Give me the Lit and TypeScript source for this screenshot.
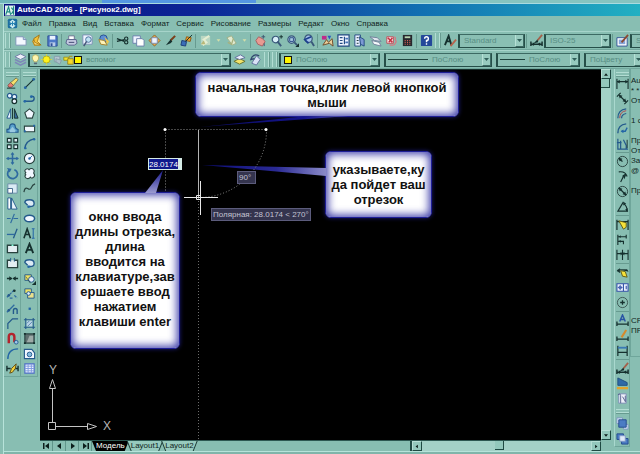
import { LitElement, html, svg, css, nothing, SVGTemplateResult } from "lit";
import { customElement, property } from "lit/decorators.js";

const N = "#245a8c";
const K = "#15302e";

const ICONS: Record<string, SVGTemplateResult> = {
  app: svg`<rect x="1" y="1" width="12" height="12" rx="2" fill="#1d6fa0"/><path d="M3 5l4-3 4 3-2 1v3l2 1-4 3-4-3 2-1V6z" fill="#cfeef2"/><path d="M3 7h8M7 4v6" stroke="#2a86b5" stroke-width="1.4"/>`,
  logo: svg`<rect width="14" height="14" fill="#dff3ef"/><path d="M1 13L5 2l3 11M3 9h4M9 3l3 4-3 5M12 1v12" stroke="#1c8a82" stroke-width="1.6" fill="none"/>`,
  newDoc: svg`<path d="M2 3h8l3 3v6H2z" fill="#f4f8ff" stroke="#7c93b5"/><path d="M10 3v3h3" fill="#b9cbe6" stroke="#7c93b5"/>`,
  open: svg`<path d="M11 12L5 12 3 8 6 4l4-1" fill="#ffe58a" stroke="#b98412" stroke-width="1.2"/><path d="M10 1L4 5l1 4 7 3-4-4z" fill="#f2c23a" stroke="#9a6a10" stroke-width=".8"/>`,
  save: svg`<path d="M2 2h10v11H2z" fill="#4d79c8" stroke="#2c4f96"/><path d="M4 2h6v4H4z" fill="#eaf2ff"/><path d="M4 9h6v4H4z" fill="#b8cbe8"/><path d="M5 10h2v3H5z" fill="#2c4f96"/>`,
  print: svg`<path d="M4 2h6v4H4z" fill="#fff" stroke="#6a7090"/><path d="M2 6h10l1 4-3 2H4L1 10z" fill="#c6cbe2" stroke="#56608a"/><path d="M4 9h6" stroke="#39406a"/>`,
  preview: svg`<path d="M2 1h8l2 2v8H2z" fill="#eef4ff" stroke="#7b8fb4"/><circle cx="8" cy="6" r="3" fill="#bfe2f2" stroke="#466c9a"/><path d="M6 8l-3 5" stroke="#46557a" stroke-width="1.6"/>`,
  publish: svg`<circle cx="7" cy="5" r="4" fill="#5c8fd6" stroke="#28508f"/><path d="M2 6l6 1 3 5-7-1z" fill="#fff2b8" stroke="#a1802a"/><path d="M8 3l5 5-2 3z" fill="#f0c548"/>`,
  cut: svg`<path d="M1 8l8-2M1 5l8 3" stroke="${K}" stroke-width="1.4"/><circle cx="11" cy="5" r="1.8" fill="none" stroke="${K}" stroke-width="1.2"/><circle cx="11" cy="9" r="1.8" fill="none" stroke="${K}" stroke-width="1.2"/>`,
  copyDoc: svg`<path d="M1 2h8v8H1z" fill="#eef3ff" stroke="#6b80ac"/><path d="M5 5h6l2 2v6H5z" fill="#fff" stroke="#6b80ac"/>`,
  paste: svg`<path d="M7 1l6 6-6 6-6-6z" fill="#e6a84c" stroke="#8f6428"/><path d="M4 4h6v6H4z" fill="#eef4ff" stroke="#7a8cb4"/>`,
  brush: svg`<path d="M12 2L7 7" stroke="#7a3f1b" stroke-width="2.2"/><path d="M7 6L2 12l5-2 2-2z" fill="${K}"/>`,
  block: svg`<path d="M7 3l5 1-1 4-5-1z" fill="#f3a12c" stroke="#8f5a12"/><path d="M2 7l5 1-1 5-5-1z" fill="#3a6db8" stroke="#1c3d78"/><path d="M13 1L6 8" stroke="${K}"/>`,
  undo: svg`<path d="M2 2h10v10H2z" fill="#b9d6c2"/><path d="M11 2L5 6l3 3-4 3" fill="none" stroke="#e5eed2" stroke-width="2.2"/><path d="M2 11l3-4 2 4z" fill="#b9b878"/>`,
  redo: svg`<path d="M2 4l5-2 5 8-4 2z" fill="#e1ead0" stroke="#9daf86"/><path d="M3 9l4 2 2-6" stroke="#a8b07c" fill="none" stroke-width="1.4"/>`,
  tri: svg`<path d="M4 5h6l-3 4z" fill="#d3dfa8"/>`,
  pan: svg`<path d="M2 7l3-4 4 2 3 3-3 5-5-2z" fill="#e89a92" stroke="#a95d60"/><path d="M10 1v4M8 3h4M11 10v3" stroke="#3d5470"/>`,
  zoomRt: svg`<circle cx="6" cy="6" r="3.6" fill="#d7eef7" stroke="#39587a" stroke-width="1.3"/><path d="M8 8l4 5" stroke="#39587a" stroke-width="2"/><path d="M10 3h4M12 1v4" stroke="${K}"/>`,
  zoomWin: svg`<circle cx="6" cy="6" r="4" fill="#a9cbe0" stroke="#39587a" stroke-width="1.3"/><path d="M4 4h4v4H4z" fill="none" stroke="#2a4a86"/><path d="M9 9l3 3" stroke="#39587a" stroke-width="2"/><path d="M14 10v4h-4z" fill="${K}"/>`,
  zoomPrev: svg`<circle cx="7" cy="5" r="4" fill="#a4c2e8" stroke="#39587a" stroke-width="1.3"/><path d="M10 8l3 5" stroke="#39587a" stroke-width="2"/><path d="M10 3L3 6l4 4" fill="none" stroke="#1c3f8e" stroke-width="1.8"/>`,
  props: svg`<path d="M1 2h5v4H1z" fill="#c02a8a"/><path d="M7 2h4l-2 4z" fill="#2a58c0"/><path d="M2 12l4-6 2 3 4-4 1 8-4-3z" fill="#ecd09a" stroke="#704a28"/>`,
  designCenter: svg`<path d="M1 1h12v12H1z" fill="#f0f5ff" stroke="#234a82" stroke-width="1.3"/><path d="M3 4h3M3 7h3M3 10h3M8 3v8" stroke="#234a82" stroke-width="1.3"/><path d="M9 4h3v2H9zM9 8h3v2H9z" fill="#4b77bb"/>`,
  palettes: svg`<path d="M2 1h6v12H2z" fill="#e7efff" stroke="#234a82"/><path d="M4 4h2M4 7h2M4 10h2" stroke="${K}"/><path d="M7 3l5 3v7l-4-2z" fill="#7d9ad4" stroke="#234a82"/>`,
  sheets: svg`<path d="M1 3l8 1 4 4-7-1z" fill="#dfe5ee" stroke="#70809a"/><path d="M3 7l8 2 2 4-8-2z" fill="#f6f8fb" stroke="#70809a"/>`,
  markup: svg`<path d="M2 3h7v7H2z" fill="#f7e4e8" stroke="#c4303f" stroke-width=".8"/><path d="M3 4l5 5M8 4L4 9" stroke="#c4303f" stroke-width="1.6"/><path d="M10 3q2 1 1 3 2 2 0 4 0 2-3 2H5" fill="none" stroke="#d67882" stroke-width="1.2"/>`,
  calc: svg`<path d="M2 1h10v12H2z" fill="#26282e"/><path d="M4 2.500h6v2H4z" fill="#b7d3b0"/><path d="M4 7h1M6.500 7h1M9 7h1M4 9h1M6.500 9h1M9 9h1M4 11h1M6.500 11h1M9 11h1" stroke="#e0655a" stroke-width="1.2"/>`,
  help: svg`<rect x="1" y="1" width="12" height="12" rx="1" fill="#24489a"/><path d="M5 5q0-2 2-2t2 2-2 2v2M7 10v1.500" fill="none" stroke="#fff" stroke-width="1.5"/>`,
  textStyle: svg`<path d="M1 12L5 2l3 10M3 8h4" stroke="${K}" stroke-width="2" fill="none"/><path d="M13 6L7 13" stroke="#b6634e" stroke-width="2"/>`,
  dimStyle: svg`<path d="M1 8v5M13 8v5M1 11h12" stroke="${K}" stroke-width="1.6"/><path d="M3 9l3 2-3 2zM11 9l-3 2 3 2z" fill="${K}"/><path d="M13 1L8 7" stroke="#a4604a" stroke-width="2"/><path d="M8 6l-4 4 5-1z" fill="${K}"/>`,
  tableStyle: svg`<path d="M1 4h11v9H1z" fill="#fff" stroke="#2c4f96"/><path d="M3 6h7v5H3z" fill="#87a4d8"/><path d="M13 1L6 9" stroke="#8a4a32" stroke-width="2"/>`,
  layers: svg`<path d="M1 4l6-3 6 3-6 3z" fill="#eef0f8" stroke="#6f7ba6"/><path d="M1 7l6 3 6-3M1 10l6 3 6-3" fill="none" stroke="#7d88b8" stroke-width="1.6"/>`,
  bulb: svg`<path d="M7 1q4 0 4 4 0 2-2 4v1H5V9Q3 7 3 5q0-4 4-4z" fill="#fff6b0" stroke="#a9a04c" stroke-width=".8"/><path d="M5 11h4v2H5z" fill="#596a78"/>`,
  sun: svg`<circle cx="7" cy="7" r="4.500" fill="#fdf21c" stroke="#a9a21a"/><path d="M7 0v2M7 12v2M0 7h2M12 7h2M2 2l1 1M11 11l1 1M12 2l-1 1M2 12l1-1" stroke="#e8dc30"/>`,
  freeze: svg`<path d="M3 3h7v7H3z" fill="#b4c7d0" stroke="#8298a6"/><path d="M5 6l7 2-2 5-5-3z" fill="#a9bfc8" stroke="#8298a6"/>`,
  lock: svg`<path d="M1 4h6v4H1z" fill="#f4e22c" stroke="#8f8a18"/><path d="M6 6h7v7H6z" fill="#f4d82c" stroke="#8f7a18"/><path d="M8 6V3h4" stroke="#a59c2e" fill="none" stroke-width="1.4"/>`,
  layPrev: svg`<path d="M1 9l6-3 6 3-6 3z" fill="#f1e36a" stroke="#66702c"/><path d="M2 5l6-3 5 3-6 2z" fill="#e8edf9" stroke="#60709c"/>`,
  layBack: svg`<path d="M3 11l5-8 4 4-4 6z" fill="#d9e2f6" stroke="#61719e"/><path d="M11 3Q4 0 2 7l4-1" fill="none" stroke="#31466f" stroke-width="1.4"/>`,
  erase: svg`<path d="M2 9l3-3 3 3-2 2H3z" fill="#e98078" stroke="#7c3c3c" stroke-width=".8"/><path d="M5 6l6-5 2 2-5 6z" fill="#f7e06b" stroke="#6a6138" stroke-width=".8"/><path d="M1 12h9" stroke="${K}"/>`,
  copy: svg`<circle cx="4" cy="4" r="2.500" fill="#e9f4ff" stroke="${N}" stroke-width="1.3"/><circle cx="9" cy="5" r="2.500" fill="#e9f4ff" stroke="${N}" stroke-width="1.3"/><circle cx="9" cy="10" r="2.500" fill="#e9f4ff" stroke="${K}" stroke-width="1.300"/>`,
  mirror: svg`<path d="M5 2v10H1z" fill="#e9f4ff" stroke="${N}"/><path d="M9 2v10h4z" fill="#356a9c" stroke="${K}"/><path d="M7 1v12" stroke="${K}"/>`,
  offset: svg`<path d="M1 11V8q3 0 3-3t3-3 3 3q0 2 3 3v3z" fill="#5aa0cc" stroke="${N}" stroke-width="1.2"/><path d="M4 11V9l3-4 3 4v2z" fill="#9ac9e0"/>`,
  array: svg`<path d="M1.500 1.500h4v4h-4zM8.500 1.500h4v4h-4zM1.500 8.500h4v4h-4zM8.500 8.500h4v4h-4z" fill="#dcebf2" stroke="${K}" stroke-width="1.2"/>`,
  move: svg`<path d="M7 1v12M1 7h12" stroke="#2e6aa0" stroke-width="1.600"/><path d="M5 3l2-3 2 3zM5 11l2 3 2-3zM3 5L0 7l3 2zM11 5l3 2-3 2z" fill="#2e6aa0"/>`,
  rotate: svg`<path d="M4 3Q1 5 2 9q2 4 6 3.500 4-1 4.500-5Q12 4 9 3" fill="none" stroke="#2e6aa0" stroke-width="1.800"/><path d="M1 1l5 1-2 4z" fill="#2e6aa0"/>`,
  scale: svg`<path d="M2 2h10v10H2z" fill="#d9eaf4" stroke="#6b8da6"/><path d="M2 7h5v5H2z" fill="#fff" stroke="#42688c"/>`,
  stretch: svg`<path d="M2 1h3v12H2z" fill="#fff" stroke="${N}"/><path d="M6 1l6 12H6z" fill="#eaf4fb" stroke="${N}"/>`,
  trim: svg`<path d="M1 7h4M8 7h5" stroke="#2e6aa0" stroke-width="1.300"/><path d="M9 2L5 12" stroke="#2e6aa0" stroke-width="1.300"/>`,
  extend: svg`<path d="M1 8h8" stroke="#2e6aa0" stroke-width="1.400"/><path d="M12 2L8 12" stroke="${N}" stroke-width="1.400"/>`,
  breakPt: svg`<path d="M1.500 3.500h11v8h-11z" fill="#e3eef2" stroke="#28423f" stroke-width="1.400"/><path d="M6 3.500h2" stroke="#8fd" stroke-width="1.600"/>`,
  breakTwo: svg`<path d="M5 3.500H1.500v8h11v-8H9" fill="#e3eef2" stroke="#28423f" stroke-width="1.400"/><path d="M5 1v4M9 1v4" stroke="${N}"/>`,
  join: svg`<path d="M1 7h5M8 7h5" stroke="${K}" stroke-width="1.600"/><path d="M3.500 4.500L7 7l-3.500 2.500zM10.500 4.500L7 7l3.500 2.500z" fill="${K}"/>`,
  chamferA: svg`<path d="M1 11l8-8M4 12h3M9 9l3 3" stroke="#2e6aa0" stroke-width="1.400" stroke-dasharray="3 1"/><circle cx="9" cy="4" r="1.400" fill="${K}"/><circle cx="3" cy="9" r="1.400" fill="${N}"/>`,
  chamferB: svg`<path d="M1 11l8-8" stroke="#2e6aa0" stroke-width="1.400"/><circle cx="3" cy="9" r="1.400" fill="${N}"/><path d="M8 13V9q0-2 2-2t2 2v4" fill="none" stroke="${N}" stroke-width="1.500"/>`,
  chamfer: svg`<path d="M2 13V7l5-5h6" fill="none" stroke="${N}" stroke-width="1.300"/>`,
  magnet: svg`<path d="M3 12V5q0-3 3-3t3 3v6" fill="none" stroke="#b3232c" stroke-width="2.600"/><circle cx="11" cy="11" r="2" fill="#9fc7ea" stroke="${N}"/>`,
  fillet: svg`<path d="M2 13Q2 2 13 2" fill="none" stroke="#2466a6" stroke-width="1.500"/>`,
  explode: svg`<path d="M1 4v6M13 4v6M1 7h4M9 7h4" stroke="${K}" stroke-width="1.500"/><path d="M4 12l2-5 5-5-1 5-3 4z" fill="#f3d33d" stroke="#5d4a14"/>`,
  line: svg`<path d="M2 12L12 2" stroke="${K}" stroke-width="1.200"/><circle cx="2.500" cy="11.500" r="1.500" fill="#2466a6"/><circle cx="11.500" cy="2.500" r="1.500" fill="#2466a6"/>`,
  pline: svg`<path d="M1 10h8q3 0 3-3T9 5" fill="none" stroke="${N}" stroke-width="1.500"/><circle cx="2" cy="10" r="1.500" fill="#2466a6"/><circle cx="9" cy="5" r="1.500" fill="#2466a6"/>`,
  polygon: svg`<path d="M7 2l5 4-2 6H4L2 6z" fill="#f1f7ff" stroke="#28423f" stroke-width="1.200"/>`,
  rect: svg`<path d="M1.500 4.500h11v6h-11z" fill="#f1f7ff" stroke="#28423f" stroke-width="1.200"/><path d="M1 10h2M11 4h2" stroke="#2466a6" stroke-width="2"/>`,
  arc: svg`<path d="M2 12Q3 4 12 2" fill="none" stroke="${N}" stroke-width="1.500"/><circle cx="2.500" cy="12" r="1.300" fill="#2466a6"/><circle cx="12" cy="2.500" r="1.300" fill="#2466a6"/>`,
  circle: svg`<circle cx="7" cy="7" r="5.500" fill="#f1f7ff" stroke="#28423f" stroke-width="1.200"/><path d="M7 7l3-3" stroke="#2466a6"/><circle cx="7" cy="7" r="1.300" fill="#2466a6"/>`,
  cloud: svg`<path d="M3 6Q1 4 3 2.500 5 1 6.500 3 8 1 10.500 2 13 3.500 11.500 6.500 13.500 9 11.500 11 9.500 13 8 11 6 13.500 3.500 12 1 10 3 8.500 1.500 7.500 3 6z" fill="#f1f7ff" stroke="#28423f" stroke-width="1.200"/>`,
  spline: svg`<path d="M1 11q1-6 4-4t4-1 4-4" fill="none" stroke="#28423f" stroke-width="1.300"/>`,
  ellipse: svg`<ellipse cx="7" cy="7" rx="5.500" ry="3.500" fill="#f1f7ff" stroke="${N}" stroke-width="1.600"/>`,
  ellArc: svg`<path d="M6 10Q12 11 12 7T7 3 2 6l3 3" fill="#dceaf4" stroke="${N}" stroke-width="1.500"/><circle cx="6" cy="10.500" r="1.400" fill="#2466a6"/>`,
  mtext: svg`<path d="M1 12L4.500 2 8 12M2.500 8h4" stroke="${K}" stroke-width="1.700" fill="none"/><path d="M11 2v10M9.500 2h3M9.500 12h3" stroke="#2466a6" stroke-width="1.100"/>`,
  text: svg`<path d="M3 12L7 2l4 10M4.500 8.500h5" stroke="${K}" stroke-width="2" fill="none"/>`,
  insert: svg`<path d="M2 3h7v6H2z" fill="#f0e264" stroke="${N}"/><circle cx="9" cy="8" r="3" fill="#dfeaf8" stroke="${N}"/><path d="M3 5l5 7M14 10v4h-4z" stroke="${K}" fill="${K}" stroke-width=".6"/>`,
  makeBlock: svg`<path d="M2 2h7v5H2z" fill="#f0e264" stroke="${N}"/><path d="M5 6h7v6H5z" fill="#e9e08c" stroke="${N}"/><circle cx="6" cy="7" r="2" fill="#dfeaf8" stroke="${N}"/>`,
  point: svg`<path d="M6 6h2.500v2.500H6z" fill="#2466a6"/>`,
  hatch: svg`<path d="M3 1v12M11 1v12M1 3h12M1 11h12" stroke="${N}" stroke-width="1.200"/><path d="M4 4h6v6H4z" fill="#b9d3e6"/><path d="M4 7l3-3M5 10l5-5" stroke="#5a87ae"/>`,
  gradient: svg`<path d="M2 2h10v10H2z" fill="#5f7070" stroke="${K}"/><path d="M7 4h4v7H4z" fill="#9daba8"/><path d="M1 1h2v2H1zM11 1h2v2h-2zM1 11h2v2H1zM11 11h2v2h-2z" fill="${K}"/>`,
  region: svg`<path d="M1.500 2.500h8l3 4v6h-11z" fill="#f1f7ff" stroke="${N}" stroke-width="1.200"/><circle cx="7" cy="8" r="2.500" fill="#86bce0" stroke="${N}"/>`,
  table: svg`<path d="M2 2h10v10H2z" fill="#eef3ff" stroke="#4b6cc4" stroke-width="1.200"/><path d="M2 4.500h10M2 7h10M2 9.500h10M5.500 2v10M9 2v10" stroke="#7e9be0"/>`,
  dLinear: svg`<path d="M1 2v11M13 2v11M1 5h12" stroke="${K}" stroke-width="1.200"/><path d="M1 5l3-2v4zM13 5l-3-2v4z" fill="${K}"/>`,
  dAligned: svg`<path d="M4 4l6 6M1 5l4-4M9 13l4-4" stroke="${K}" stroke-width="1.300"/><path d="M3 3l4 1-3 3zM11 11l-4-1 3-3z" fill="${K}"/>`,
  dArc: svg`<path d="M2 12Q2 3 11 2M6 12q0-4 5-5" fill="none" stroke="${N}" stroke-width="1.300"/><path d="M4 12Q4 5 11 4" fill="none" stroke="#b2404a"/>`,
  dOrd: svg`<path d="M2 12Q2 3 11 2" fill="none" stroke="${N}" stroke-width="1.500"/><path d="M6 10h4l2-4" fill="none" stroke="#2466a6" stroke-width="1.500"/><path d="M5 10l3-2v4z" fill="#2466a6"/>`,
  dRad: svg`<path d="M2 2v11h11M5 4v9M8 3l3 6v4M1 6h5" stroke="${N}" stroke-width="1.300" fill="none"/><path d="M12 3v9" stroke="${K}"/>`,
  dCirc: svg`<circle cx="7" cy="7" r="5.500" fill="none" stroke="#28423f"/><path d="M7 7L3 4" stroke="${K}" stroke-width="1.300"/><path d="M3 3l4 1-3 3z" fill="${K}"/>`,
  dJog: svg`<path d="M3 2q7-1 9 5M5 13l2-4 1-3 3-2" fill="none" stroke="${K}" stroke-width="1.200"/><path d="M7 6l4-1-2 5z" fill="${K}"/>`,
  dDia: svg`<circle cx="7" cy="7" r="5.500" fill="none" stroke="#28423f"/><path d="M3 3l8 8" stroke="${K}" stroke-width="1.300"/><path d="M3 3l4 1-3 3zM11 11l-4-1 3-3z" fill="${K}"/>`,
  dAng: svg`<path d="M8 2L2 12h11M8 4q4 2 4 8" fill="none" stroke="${K}" stroke-width="1.200"/><path d="M8 2l3 2-3 2zM13 9l-1 4-2-3z" fill="${K}"/>`,
  dQuick: svg`<path d="M1 2v11M13 2v11M1 4h12" stroke="${K}" stroke-width="1.300"/><path d="M3 3l8 2v5l-3 2z" fill="#f6e23a" stroke="#5d5a14"/>`,
  dBase: svg`<path d="M2 2v11M2 4h9v2M2 9h6v3M11 2v4" stroke="${K}" stroke-width="1.200" fill="none"/><path d="M3 4l2-1.500v3zM3 9l2-1.500v3z" fill="${K}"/>`,
  dCont: svg`<path d="M1 2v11M7 2v11M13 2v11M1 6h12" stroke="${K}" stroke-width="1.200"/><path d="M7 6L5 4v4zM7 6l2-2v4z" fill="${K}"/>`,
  dLeader: svg`<path d="M1 5l3-2v4zM4 4h8l1 2" stroke="${K}" fill="${K}" stroke-width=".8"/><path d="M5 5l5 1 2 6-5-1z" fill="#f6e23a" stroke="#5d5a14"/>`,
  dTol: svg`<path d="M1 3h12v8H1z" fill="#eef3ff" stroke="#3553a8" stroke-width="1.200"/><path d="M8 3v8M11 5v4" stroke="#3553a8" stroke-width="1.2"/><circle cx="4.500" cy="7" r="1.500" fill="none" stroke="#3553a8"/><path d="M2 7h5M4.500 4.500v5" stroke="#3553a8" stroke-width=".8"/>`,
  dCenter: svg`<circle cx="7" cy="7" r="5.500" fill="none" stroke="#3a5552"/><path d="M7 4.500v5M4.500 7h5" stroke="${K}" stroke-width="1.400"/>`,
  dEdit: svg`<path d="M4 8l3-7 3 7M5 6h4" stroke="#2a55a4" stroke-width="1.600" fill="none"/><path d="M1 8v5M13 8v5M1 11h12" stroke="${K}" stroke-width="1.400"/>`,
  dTedit: svg`<path d="M1 8v5M13 8v5M1 11h12" stroke="${K}" stroke-width="1.400"/><path d="M11 1L6 9" stroke="#d58a2c" stroke-width="2.200"/>`,
  dUpdate: svg`<path d="M2 2v11M12 2v11M2 9h10" stroke="${K}" stroke-width="1.300"/><path d="M2 3h10v2H2z" fill="#3a7ab4"/>`,
  dWedge: svg`<path d="M2 1l10 5v3H2z" fill="#2f6aa8" stroke="#1f4e80"/><path d="M1 12h12" stroke="#e2a32c" stroke-width="2.400"/>`,
  dScript: svg`<path d="M3 2h8v10H3z" fill="#eef0fa" stroke="#7c8ab4"/><path d="M2 3q3-2 3 1v8M10 4v7M7 5l3 5" stroke="#53608c" fill="none"/>`,
  orderA: svg`<path d="M1 1h6v6H1zM8 8h5v5H8z" fill="#dfeaf8" stroke="#7e97c4"/><path d="M3 3h8v8H3z" fill="#4b7cc4" stroke="#234a8c"/>`,
  orderB: svg`<path d="M1 2h7v6H1z" fill="#4b7cc4" stroke="#234a8c"/><path d="M6 7h7v6H6z" fill="#4b7cc4" stroke="#234a8c"/><path d="M4 4h6v6H4z" fill="#dfeaf8" stroke="#7e97c4"/>`,
};

const icon = (name: string) =>
  html`<svg class="ic" viewBox="0 0 14 14" aria-hidden="true">${ICONS[name]}</svg>`;

const toolButton = (name: string) =>
  name === "|"
    ? html`<i class="sep"></i>`
    : html`<button class=${name === "tri" ? "tool slim" : "tool"} aria-label=${name}>${icon(name)}</button>`;

const shared = css`
  * { box-sizing: border-box; }
  button, input, select {
    font: inherit; color: inherit; margin: 0; padding: 0; border: 0;
    background: none; border-radius: 0; appearance: none; outline: 0;
  }
  .ic { display: block; width: 13px; height: 13px; flex: none; }
`;

@customElement("cad-combo")
class CadCombo extends LitElement {
  @property() label = "";
  @property() value = "";
  @property({ type: Boolean }) swatch = false;
  @property({ type: Boolean }) stroke = false;
  @property({ type: Boolean }) states = false;

  static styles = [shared, css`
    :host { display: block; min-width: 0; }
    .box {
      display: flex; align-items: center; height: 14px; overflow: hidden;
      border: 1px solid #264f49; border-left-width: 2px; border-top-color: #3c6a63;
      background: #8abfb3; color: #588e84;
    }
    .swatch { width: 8px; height: 8px; flex: none; border: 1px solid #111; background: #fdf500; margin-left: 3px; }
    .stroke { flex: 1; height: 1px; margin-left: 2px; background: #1e433d; }
    .states { display: flex; }
    .states .ic { width: 11px; height: 11px; }
    select { flex: 1; min-width: 0; height: 12px; padding-left: 4px; line-height: 12px; }
    .arrow {
      flex: none; width: 9px; height: 12px; display: grid; place-items: center;
      background: #97cabe; border-right: 1px solid #3c6a63; border-bottom: 1px solid #3c6a63;
      border-left: 1px solid #b7e0d6;
    }
    .arrow svg { width: 5px; height: 3px; }
    .swatch.tight { margin-left: 0; }
    .fixed { flex: 0 0 var(--text-room, 45px); }
  `];

  render() {
    return html`<label class="box">
      ${this.states ? html`<span class="states">${["bulb", "sun", "freeze", "lock"].map(icon)}</span>` : nothing}
      ${this.swatch ? html`<i class="swatch ${this.states ? "tight" : ""}"></i>` : nothing}
      ${this.stroke ? html`<i class="stroke"></i>` : nothing}
      <select class=${this.stroke ? "fixed" : ""} aria-label=${this.label}><option>${this.value}</option></select>
      <span class="arrow"><svg viewBox="0 0 5 3"><path d="M0 0h5L2.500 3z" fill="#31605a"/></svg></span>
    </label>`;
  }
}

@customElement("app-root")
class AppRoot extends LitElement {
  static styles = [shared, css`
    :host {
      display: flex; flex-direction: column; height: 100vh; min-height: 400px; overflow: hidden;
      font: 8px/10px "Liberation Sans", Arial, sans-serif; color: #102522; background: #88beb2;
    }
    .behind { height: 4px; flex: none; display: flex; border-bottom: 1px solid #a9dbe0; background: #86c4c0; }
    .behind i { width: 16%; background: #6fb5b9; }
    .behind b { width: 24%; background: #5597e2; }
    .window { flex: 1; min-height: 0; margin-left: 3px; display: flex; flex-direction: column; border-left: 1px solid #b7e3da; }
    .title {
      flex: none; display: flex; align-items: center; gap: 2px; height: 12px; padding-left: 1px;
      font-weight: bold; color: #fff; white-space: nowrap;
      background: linear-gradient(90deg, #0b1680, #0c2496 30%, #1170b2 66%, #22b0c2);
    }
    .title .ic { width: 10px; height: 11px; }
    .menu { flex: none; display: flex; align-items: center; gap: 7px; height: 15px; padding-left: 3px; white-space: nowrap; }
    .menu .ic { width: 11px; height: 11px; margin-right: -3px; }
    .menu button { line-height: 12px; }
    .bar { flex: none; display: flex; align-items: center; height: 19px; border-top: 1px solid #a6d4ca; border-bottom: 1px solid #71a79c; }
    .tool { flex: none; width: 16px; height: 15px; display: grid; place-items: center; }
    .slim { width: 10px; }
    .slim .ic { width: 9px; height: 9px; }
    .sep { flex: none; align-self: center; width: 1px; height: 14px; margin: 0 1px; background: #679b90; }
    .grip { flex: none; width: 5px; height: 15px; margin: 0 2px 0 1px; border: solid #b2ddd3; border-width: 0 1px; box-shadow: 1px 0 #679b90; }
    .std { flex: 0 0 67px; }
    .lay { flex: 0 0 203px; }
    .col { flex: 0 0 101px; margin-right: 4px; }
    .lin { flex: 0 0 108px; margin-right: 4px; --text-room: 54px; }
    .wgt { flex: 0 0 84px; margin-right: 4px; }
    .rest { flex: 1 0 60px; }

    .work { flex: 1; min-height: 0; display: flex; }
    .side { flex: none; display: flex; }
    .vbar { width: 17px; align-self: flex-start; border: solid #6fa69b; border-width: 0 1px 1px 0; display: flex; flex-direction: column; align-items: center; }
    .vbar .tool { height: 15px; width: 15px; }
    .vbar .sep { width: 13px; height: 1px; margin: 1px 0; }
    .vgrip { width: 13px; height: 4px; margin: 3px 0 0; border: solid #b2ddd3; border-width: 1px 0; box-shadow: 0 1px #679b90; }
    .vgrip.split { margin-bottom: 3px; }

    .doc { flex: 1; min-width: 0; margin-left: 2px; display: grid; grid-template: 1fr 11px / 1fr 10px; }
    .canvas { position: relative; overflow: hidden; background: #000; border-top: 1px solid #16302c; }
    .draw { position: absolute; inset: 0; width: 100%; height: 100%; }
    .ucs { position: absolute; left: 7px; bottom: 7px; width: 66px; height: 72px; font-size: 12px; }
    .note {
      position: absolute; display: grid; place-items: center; text-align: center;
      font-size: 13px; line-height: 15px; font-weight: bold; color: #111; background: #fff;
      border: 1px solid #1e1e96; border-radius: 6px;
      box-shadow: inset 0 0 9px 2px #3a3aa8, 0 0 4px #1b1b78;
    }
    .start { left: 155px; top: 2px; width: 264px; height: 45px; }
    .way { left: 285px; top: 81px; width: 107px; height: 67px; }
    .len { left: 30px; top: 122px; width: 110px; height: 157px; padding-bottom: 4px; }
    .tip { position: absolute; padding: 0 1px; background: #34344e; border: 1px solid #5c5c7c; color: #c3c3d2; white-space: nowrap; line-height: 11px; }
    .angle { left: 197px; top: 101px; padding-right: 4px; }
    .polar { left: 171px; top: 138px; }
    .entry {
      position: absolute; left: 108px; top: 88px; width: 34px; height: 12px;
      color: #fff; border: 1px solid #d5ebe6;
      background: linear-gradient(90deg, #101a8c 29px, #d5ebe6 29px);
    }

    .vs { display: flex; flex-direction: column; background: #a3d1c7; }
    .sb { width: 10px; height: 10px; flex: none; display: grid; place-items: center; background: #93c8bc; border: 1px solid #1f4a43; border-top-color: #b7e0d6; border-left-color: #b7e0d6; }
    .sb svg { width: 4px; height: 5px; }
    .thumb { width: 9px; height: 9px; flex: none; background: #93c8bc; border: solid #1f4a43; border-width: 0 1px 1px 0; }
    .fill { flex: 1; }
    .foot { display: flex; min-width: 0; border-top: 1px solid #2d5852; background: #88beb2; }
    .nav { width: 13px; height: 10px; display: grid; place-items: center; border-right: 1px solid #5f958a; }
    .nav svg { width: 7px; height: 6px; }
    .tab {
      height: 10px; line-height: 10px; margin-left: -2px;
      background: #1b3a36; clip-path: polygon(0 0, 100% 0, calc(100% - 4px) 100%, 4px 100%);
    }
    .tab.on { background: #000; color: #fff; margin-left: 0; padding: 0 4px; }
    .tab span { display: block; padding: 0 4px; background: #97cabe; clip-path: polygon(1px 0, calc(100% - 1px) 0, calc(100% - 5px) 100%, 5px 100%); }
    .hs { flex: 0 0 34%; display: flex; background: #a3d1c7; border-left: 2px solid #1f4a43; }
    .fill.late { flex: 1.2; }
    .corner { background: #88beb2; }
    .right { margin-left: 3px; }
    .right .vbar { width: 16px; border-left: 1px solid #a9d8ce; }
    .cmd { width: 10px; height: 288px; padding-top: 7px; border-bottom: 1px solid #6fa69b; border-left: 1px solid #6fa69b; white-space: pre; line-height: 10px; }
    .base { flex: none; height: 3px; border-top: 1px solid #b7e3da; background: #7fb5aa; }
  `];

  private menu = ["Файл", "Правка", "Вид", "Вставка", "Формат", "Сервис", "Рисование", "Размеры", "Редакт", "Окно", "Справка"];
  private standard = ["newDoc", "open", "save", "|", "print", "preview", "publish", "|", "cut", "copyDoc", "paste", "brush", "block", "|",
    "undo", "tri", "redo", "tri", "|", "pan", "zoomRt", "zoomWin", "zoomPrev", "|", "props", "designCenter", "palettes", "sheets", "markup", "calc", "|", "help"];
  private modify = ["erase", "copy", "mirror", "offset", "array", "move", "rotate", "scale", "stretch", "trim", "extend", "breakPt", "breakTwo",
    "join", "chamferA", "chamferB", "chamfer", "magnet", "fillet", "explode"];
  private drawing = ["line", "pline", "polygon", "rect", "arc", "circle", "cloud", "spline", "ellArc", "ellipse", "mtext", "text", "ellArc",
    "insert", "makeBlock", "point", "hatch", "gradient", "region", "table"];
  private dims = ["dLinear", "dAligned", "dArc", "dOrd", "dRad", "|", "dCirc", "dJog", "dDia", "dAng", "|", "dQuick", "dBase", "dCont", "|",
    "dLeader", "dTol", "dCenter", "|", "dEdit", "dTedit", "dUpdate", "|", "dimStyle", "dWedge", "dScript"];
  private log = ["Au", "* *", "От", "", "1 с", "", "Пр", "От", "За", "@", "", "Пр", ...Array(12).fill(""), "СР", "ПР"];

  private arrow(d: string, label: string, cls = "sb") {
    return html`<button class=${cls} aria-label=${label}><svg viewBox="0 0 7 6"><path d=${d} fill="#0c1f1c"/></svg></button>`;
  }

  render() {
    return html`
      <div class="behind"><i></i><b></b></div>
      <div class="window">
        <header class="title">${icon("logo")}<span>AutoCAD 2006 - [Рисунок2.dwg]</span></header>
        <nav class="menu">${icon("app")}${this.menu.map((m) => html`<button>${m}</button>`)}</nav>
        <div class="bar">
          <i class="grip"></i>${this.standard.map(toolButton)}
          <i class="grip"></i>${toolButton("textStyle")}
          <cad-combo class="std" label="Text style" value="Standard"></cad-combo><i class="sep"></i>
          ${toolButton("dimStyle")}
          <cad-combo class="std" label="Dimension style" value="ISO-25"></cad-combo><i class="sep"></i>
          ${toolButton("tableStyle")}
          <cad-combo class="std" label="Table style" value="S"></cad-combo>
        </div>
        <div class="bar">
          <i class="grip"></i>${toolButton("layers")}
          <cad-combo class="lay" label="Layer" value="вспомог" states swatch></cad-combo>
          ${toolButton("layPrev")}${toolButton("layBack")}
          <i class="grip"></i><i class="grip"></i>
          <cad-combo class="col" label="Color" value="ПоСлою" swatch></cad-combo>
          <cad-combo class="lin" label="Linetype" value="ПоСлою" stroke></cad-combo>
          <cad-combo class="wgt" label="Lineweight" value="ПоСлою" stroke></cad-combo>
          <cad-combo class="rest" label="Plot style" value="ПоЦвету"></cad-combo>
        </div>
        <main class="work">
          <div class="side">
            <div class="vbar"><i class="vgrip"></i>${this.modify.map(toolButton)}</div>
            <div class="vbar"><i class="vgrip"></i>${this.drawing.map(toolButton)}</div>
          </div>
          <div class="doc">
            <div class="canvas">${this.renderDrawing()}</div>
            <div class="vs">
              ${this.arrow("M0 5h7L3.500 1z", "Up")}<i class="thumb"></i><i class="fill"></i>
              ${this.arrow("M0 1h7L3.500 5z", "Down")}
            </div>
            <div class="foot">
              ${this.arrow("M0 0h1.500v6H0zM6 0v6L2 3z", "First", "nav")}
              ${this.arrow("M5 0v6L1 3z", "Previous", "nav")}
              ${this.arrow("M2 0v6l4-3z", "Next", "nav")}
              ${this.arrow("M5.500 0H7v6H5.500zM1 0v6l4-3z", "Last", "nav")}
              <button class="tab on">Модель</button>
              <button class="tab"><span>Layout1</span></button>
              <button class="tab"><span>Layout2</span></button>
              <i class="fill"></i>
              <div class="hs">
                ${this.arrow("M5 0v6L1 3z", "Left")}<i class="fill"></i><i class="thumb"></i><i class="fill late"></i>
                ${this.arrow("M2 0v6l4-3z", "Right")}
              </div>
            </div>
            <div class="corner"></div>
          </div>
          <div class="side right">
            <div class="vbar">
              <i class="vgrip"></i>${this.dims.map(toolButton)}
              <i class="vgrip split"></i>${toolButton("orderA")}${toolButton("orderB")}
            </div>
            <div class="cmd">${this.log.join("\n")}</div>
          </div>
        </main>
        <div class="base"></div>
      </div>`;
  }

  private renderDrawing() {
    return html`
      <div class="note start">начальная точка,клик левой кнопкой<br>мыши</div>
      <div class="note way">указываете,ку<br>да пойдет ваш<br>отрезок</div>
      <div class="note len"><span>окно ввода<br>длины отрезка,<br>длина<br>вводится на<br>клавиатуре,зав<br>ершаете ввод<br>нажатием<br>клавиши enter</span></div>
      <svg class="draw">
        <defs>
          <linearGradient id="a"><stop offset="0" stop-color="#0a0a5c"/><stop offset=".7" stop-color="#14148c"/><stop offset="1" stop-color="#5a5ab4"/></linearGradient>
          <linearGradient id="b"><stop offset="0" stop-color="#0c0c78"/><stop offset=".6" stop-color="#2a2a94"/><stop offset="1" stop-color="#8a8ac8"/></linearGradient>
          <linearGradient id="c" x2="0" y2="1"><stop offset="0" stop-color="#16168c"/><stop offset="1" stop-color="#9a9ad0"/></linearGradient>
        </defs>
        <path d="M160 57L268 46h40z" fill="url(#a)"/>
        <path d="M162 95l124 3v8z" fill="url(#b)"/>
        <path d="M123 100l-18 23h11z" fill="url(#c)"/>
        <g fill="none" stroke="#8c8c8c" stroke-dasharray="1 2">
          <path d="M125.500 59.500h101"/><path d="M125.500 59.500v62"/>
          <path d="M226.500 59.500A67 67 0 0 1 159.500 127.500"/>
          <line x1="158.500" y1="128" x2="158.500" y2="100%" stroke="#6c6c6c"/>
        </g>
        <circle cx="125" cy="59.500" r="1.500" fill="#fff"/><circle cx="226" cy="59.500" r="1.500" fill="#fff"/>
        <path d="M158.500 60v67" stroke="#b4b4b4"/>
        <path d="M144 127.500h34M160.500 111v34" stroke="#e8e8e8"/>
        <path d="M156.500 125.500h4v4h-4z" fill="none" stroke="#e8e8e8"/>
      </svg>
      <svg class="ucs" viewBox="0 -4 66 72">
        <g fill="none" stroke="#c4c4c4">
          <path d="M1.500 57.500h7v7h-7zM5.500 57V23M2.500 23.500h6l-3-9zM9 61.500h31M40.500 58.500v6l9-3z"/>
        </g>
        <text x="2" y="9" fill="#b4b4b4">Y</text><text x="56" y="65" fill="#b4b4b4">X</text>
      </svg>
      <input class="entry" aria-label="Length" value="28.0174">
      <div class="tip angle">90°</div>
      <div class="tip polar">Полярная: 28.0174 &lt; 270°</div>`;
  }
}
